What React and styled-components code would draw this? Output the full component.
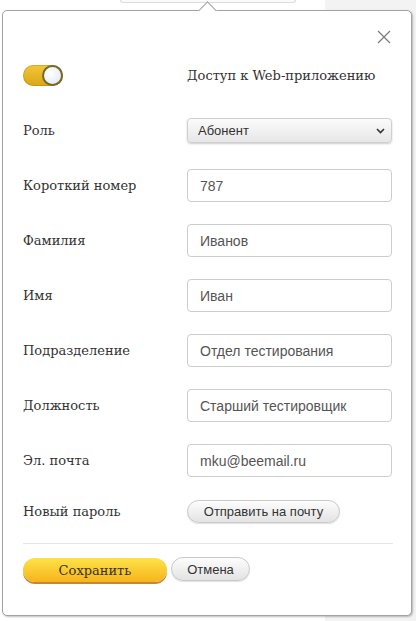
import React from "react";
import styled, { createGlobalStyle } from "styled-components";

const GlobalStyle = createGlobalStyle`
  html, body {
    margin: 0;
    padding: 0;
  }
  body {
    background: linear-gradient(to right, #ffffff 0, #ffffff 325px, #f3f3f3 325px);
    font-family: "DejaVu Serif", serif;
  }
`;

const Page = styled.div`
  width: 416px;
  min-height: 621px;
`;

const TopStrip = styled.div`
  height: 10px;
  display: flex;
  align-items: flex-start;
`;

const Tab = styled.div`
  margin-left: 120px;
  width: 174px;
  height: 2px;
  border: 1px solid #dcdcdc;
  border-top: none;
  border-radius: 0 0 10px 10px;
  background: #fafafa;
`;

const Panel = styled.div`
  position: relative;
  margin-left: 2px;
  width: 410px;
  height: 606px;
  background: #fff;
  border: 1px solid #a3a3a3;
  border-radius: 5px;
  box-shadow: 1px 1px 2px rgba(0, 0, 0, 0.25);
  padding: 20px 21px 0 20px;
  box-sizing: border-box;
  display: flex;
  flex-direction: column;
`;

const Tail = styled.div`
  position: absolute;
  top: -7px;
  left: 198px;
  width: 12px;
  height: 12px;
  background: #fff;
  border-left: 1px solid #a3a3a3;
  border-top: 1px solid #a3a3a3;
  transform: rotate(45deg);
`;

const CloseRow = styled.div`
  display: flex;
  justify-content: flex-end;
  height: 12px;
  margin-bottom: 5px;
  padding-right: 0;
`;

const CloseButton = styled.button`
  width: 14px;
  height: 14px;
  padding: 0;
  margin: -1px -1px 0 0;
  border: none;
  background: none;
  cursor: pointer;
  display: flex;
`;

const Row = styled.div`
  display: grid;
  grid-template-columns: 164px 205px;
  align-items: center;
  height: ${(p) => p.$h || 55}px;
`;

const Label = styled.label`
  font-family: "DejaVu Serif", serif;
  font-size: 13px;
  color: #333;
`;

const ToggleText = styled.span`
  font-family: "DejaVu Serif", serif;
  font-size: 13px;
  color: #333;
`;

const Toggle = styled.div`
  position: relative;
  width: 40px;
  height: 21px;
  border-radius: 11px;
  background: linear-gradient(#f2c73a, #dca516);
  box-shadow: inset 0 0 0 1px rgba(170, 120, 0, 0.35);
`;

const Knob = styled.div`
  position: absolute;
  right: 0;
  top: 0;
  width: 21px;
  height: 21px;
  box-sizing: border-box;
  border-radius: 50%;
  border: 2px solid #6f6a2e;
  background: radial-gradient(circle at 40% 40%, #ffffff, #dde6f0);
`;

const SelectWrap = styled.div`
  position: relative;
  width: 205px;
`;

const Select = styled.select`
  appearance: none;
  width: 100%;
  height: 25px;
  padding: 0 24px 0 10px;
  border: 1px solid #cfcfcf;
  border-radius: 4px;
  background: linear-gradient(#fbfbfb, #e7e7e7);
  box-shadow: 0 1px 2px rgba(0, 0, 0, 0.2);
  font-family: "Liberation Sans", Arial, sans-serif;
  font-size: 13px;
  color: #333;
  outline: none;
`;

const Chevron = styled.svg`
  position: absolute;
  right: 7px;
  top: 10px;
  pointer-events: none;
`;

const Input = styled.input`
  width: 205px;
  height: 33px;
  box-sizing: border-box;
  padding: 0 12px;
  border: 1px solid #cdcdcd;
  border-radius: 4px;
  font-family: "Liberation Sans", Arial, sans-serif;
  font-size: 14px;
  color: #555;
  outline: none;
`;

const PillButton = styled.button`
  width: ${(p) => p.$w}px;
  height: ${(p) => p.$hgt || 23}px;
  padding: 0;
  border: 1px solid #c9c9c9;
  border-radius: 12px;
  background: linear-gradient(#fdfdfd, #e3e3e3);
  box-shadow: 0 1px 1px rgba(0, 0, 0, 0.12);
  font-family: "Liberation Sans", Arial, sans-serif;
  font-size: 13px;
  color: #333;
  cursor: pointer;
`;

const Divider = styled.hr`
  margin: 9px 0 0;
  width: 370px;
  border: none;
  border-top: 1px solid #e6e6e6;
`;

const Actions = styled.div`
  display: flex;
  gap: 4px;
  margin-top: 13px;
  align-items: flex-start;
`;

const SaveButton = styled.button`
  width: 144px;
  height: 24px;
  margin-top: 1px;
  padding: 0;
  border: none;
  border-radius: 12px;
  background: linear-gradient(#fde24a, #f6b51a);
  box-shadow: 0 2px 0 #c4863c;
  font-family: "DejaVu Serif", serif;
  font-size: 13px;
  color: #3b3322;
  cursor: pointer;
`;

const fields = [
  { label: "Короткий номер", value: "787" },
  { label: "Фамилия", value: "Иванов" },
  { label: "Имя", value: "Иван" },
  { label: "Подразделение", value: "Отдел тестирования" },
  { label: "Должность", value: "Старший тестировщик" },
  { label: "Эл. почта", value: "mku@beemail.ru" },
];

export default function App() {
  return (
    <Page>
      <GlobalStyle />
      <TopStrip>
        <Tab />
      </TopStrip>
      <Panel>
        <Tail />
        <CloseRow>
          <CloseButton aria-label="Закрыть">
            <svg width="14" height="14" viewBox="0 0 14 14">
              <path d="M1 1 L13 13 M13 1 L1 13" stroke="#7a7a7a" strokeWidth="1.2" />
            </svg>
          </CloseButton>
        </CloseRow>

        <Row>
          <Toggle>
            <Knob />
          </Toggle>
          <ToggleText>Доступ к Web-приложению</ToggleText>
        </Row>

        <Row>
          <Label>Роль</Label>
          <SelectWrap>
            <Select defaultValue="Абонент">
              <option>Абонент</option>
              <option>Администратор</option>
            </Select>
            <Chevron width="9" height="6" viewBox="0 0 9 6">
              <path d="M1 1 L4.5 4.5 L8 1" fill="none" stroke="#333" strokeWidth="1.6" />
            </Chevron>
          </SelectWrap>
        </Row>

        {fields.map((f) => (
          <Row key={f.label}>
            <Label>{f.label}</Label>
            <Input defaultValue={f.value} />
          </Row>
        ))}

        <Row $h={46}>
          <Label>Новый пароль</Label>
          <PillButton $w={153}>Отправить на почту</PillButton>
        </Row>

        <Divider />

        <Actions>
          <SaveButton>Сохранить</SaveButton>
          <PillButton $w={79} $hgt={24}>
            Отмена
          </PillButton>
        </Actions>
      </Panel>
    </Page>
  );
}
